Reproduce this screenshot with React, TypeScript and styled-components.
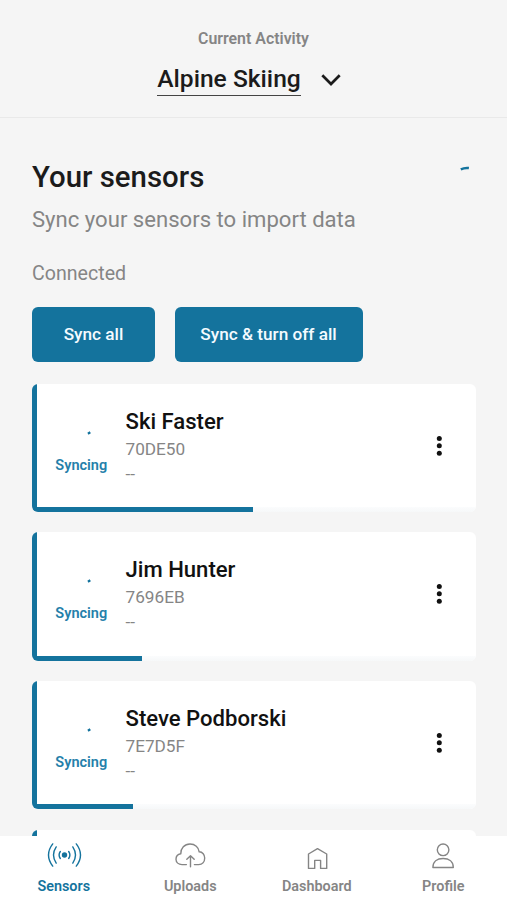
import React from 'react';
import styled, { createGlobalStyle } from 'styled-components';

const BLUE = '#14739d';
const GRAY = '#858585';

const GlobalStyle = createGlobalStyle`
  * { box-sizing: border-box; }
  html, body { margin: 0; padding: 0; background: #f5f5f5; }
  body { font-family: Roboto, "Liberation Sans", sans-serif; color: #1b1b1b; }
  button { font: inherit; border: 0; padding: 0; background: none; color: inherit; }
  h1, h2, h3, p { margin: 0; }
`;

const Screen = styled.div`
  display: flex;
  flex-direction: column;
  width: 507px;
  height: 900px;
  overflow: hidden;
  background: #f5f5f5;
`;

const Header = styled.header`
  flex: none;
  height: 118px;
  padding-top: 29px;
  display: flex;
  flex-direction: column;
  align-items: center;
  border-bottom: 1px solid #e9e9e9;
`;

const HeaderLabel = styled.div`
  font-size: 15.9px;
  line-height: 20px;
  font-weight: 600;
  color: #858585;
`;

const ActivityPicker = styled.button`
  display: flex;
  align-items: flex-start;
  gap: 20px;
  margin: 14px 0 0 -9px;
`;

const ActivityName = styled.span`
  height: 33px;
  line-height: 32px;
  font-size: 24.6px;
  font-weight: 500;
  white-space: nowrap;
  border-bottom: 1.5px solid #444;
`;

const Chevron = styled.svg`
  margin-top: 11px;
`;

const Main = styled.main`
  flex: 1;
  min-height: 0;
  overflow: hidden;
  padding: 41px 31px 0 32px;
`;

const TitleRow = styled.div`
  display: flex;
  justify-content: space-between;
  height: 36px;
`;

const Title = styled.h1`
  font-size: 29.4px;
  line-height: 36px;
  font-weight: 500;
  white-space: nowrap;
`;

const Subtitle = styled.p`
  margin-top: 8px;
  font-size: 22.1px;
  line-height: 32px;
  color: ${GRAY};
  white-space: nowrap;
`;

const SectionLabel = styled.h2`
  margin-top: 27px;
  font-size: 19.6px;
  line-height: 24px;
  font-weight: 400;
  color: ${GRAY};
`;

const Actions = styled.div`
  display: flex;
  gap: 19.5px;
  margin-top: 21px;
`;

const ActionButton = styled.button<{ $width: number }>`
  width: ${(p) => p.$width}px;
  height: 54.5px;
  border-radius: 6px;
  background: ${BLUE};
  color: #f4fbff;
  font-size: 17.2px;
  font-weight: 500;
  white-space: nowrap;
`;

const CardList = styled.div`
  display: flex;
  flex-direction: column;
  gap: 20.2px;
  margin-top: 22px;
`;

const Card = styled.article`
  flex: none;
  height: 128.5px;
  display: flex;
  flex-direction: column;
  justify-content: flex-end;
  overflow: hidden;
  padding-left: 5px;
  border-radius: 6px;
  background: linear-gradient(to right, ${BLUE} 5px, #fff 5px);
`;

const CardBody = styled.div`
  flex: 1;
  display: flex;
`;

const SyncStatus = styled.div`
  width: 88.5px;
  display: flex;
  flex-direction: column;
  align-items: center;
  font-size: 14.5px;
  line-height: 20px;
  font-weight: 600;
  color: #2580aa;
`;

const StatusSpinner = styled.svg`
  margin: 37px 0 15px;
`;

const Details = styled.div`
  flex: 1;
  padding-top: 22px;
`;

const SensorName = styled.h3`
  padding-bottom: 1px;
  font-size: 22.1px;
  line-height: 30px;
  font-weight: 500;
  color: #111;
`;

const SensorMeta = styled.div`
  font-size: 17.2px;
  line-height: 25px;
  color: ${GRAY};
`;

const MenuButton = styled.button`
  width: 74px;
  display: flex;
  justify-content: center;
  padding-top: 50px;
`;

const Track = styled.div`
  height: 5px;
  background: linear-gradient(#fbfcfd, #f6f8f9);
`;

const Progress = styled.div`
  height: 100%;
  background: ${BLUE};
`;

const NavBar = styled.nav`
  flex: none;
  height: 64px;
  padding-left: 0.5px;
  display: grid;
  grid-template-columns: repeat(4, 126.5px);
  background: #fff;
`;

const NavItem = styled.button<{ $active?: boolean }>`
  display: flex;
  flex-direction: column;
  align-items: center;
  gap: 1px;
  padding-top: 2px;
  font-size: 14.4px;
  line-height: 20px;
  font-weight: 600;
  color: ${(p) => (p.$active ? BLUE : '#858585')};
`;

const NavIcon = styled.svg`
  display: block;
  width: 40px;
  height: 38px;
  fill: none;
  stroke: currentColor;
  stroke-width: 1.4;
  stroke-linecap: round;
  stroke-linejoin: round;
`;

const SensorsIcon = () => (
  <NavIcon viewBox="0 0 40 38">
    <circle cx="20.5" cy="17" r="2.7" fill="currentColor" stroke="none" />
    <path d="M16.3 13.5Q13.9 17 16.3 20.5M24.7 13.5Q27.1 17 24.7 20.5M12.2 8.9Q6.8 17 12.2 25.1M28.8 8.9Q34.2 17 28.8 25.1M8.7 5.9Q0.3 17 8.7 28.1M32.3 5.9Q40.7 17 32.3 28.1" />
  </NavIcon>
);

const UploadsIcon = () => (
  <NavIcon viewBox="0 0 40 38">
    <path d="M16.4 26.6H12C8.5 26.6 6 24.3 6 21.3C6 18.3 8 16.2 10.8 15.8C10.6 10.3 14.6 6 20 6C25 6 28.7 9.2 29.2 13.8C32.5 13.9 34.7 16.8 34.7 20.1C34.7 23.9 32.2 26.6 28.7 26.6H24.4M20.5 28.7V18.2M16.8 21.3L20.5 17.7L24.2 21.3" />
  </NavIcon>
);

const DashboardIcon = () => (
  <NavIcon viewBox="0 0 40 38">
    <path d="M11.5 16L20.5 10.7L29.7 16V30.4H23.6V22.4H17.7V30.4H11.5Z" />
  </NavIcon>
);

const ProfileIcon = () => (
  <NavIcon viewBox="0 0 40 38">
    <circle cx="20.1" cy="11.8" r="5.8" />
    <path d="M9.9 29.5C9.9 23.7 14.1 20.5 20.1 20.5S30.3 23.7 30.3 29.5Z" />
  </NavIcon>
);

const sensors = [
  { name: 'Ski Faster', id: '70DE50', progress: 216 / 439 },
  { name: 'Jim Hunter', id: '7696EB', progress: 105.2 / 439 },
  { name: 'Steve Podborski', id: '7E7D5F', progress: 96.2 / 439 },
  { name: '', id: '', progress: 0 },
];

export default function App() {
  return (
    <Screen>
      <GlobalStyle />
      <Header>
        <HeaderLabel>Current Activity</HeaderLabel>
        <ActivityPicker>
          <ActivityName>Alpine Skiing</ActivityName>
          <Chevron width="20" height="13" viewBox="0 0 20 13" fill="none" stroke="#1b1b1b" strokeWidth="2.7">
            <path d="M1.3 1.3L10 10L18.7 1.3" />
          </Chevron>
        </ActivityPicker>
      </Header>
      <Main>
        <TitleRow>
          <Title>Your sensors</Title>
          <svg width="24" height="24" viewBox="0 0 24 24" fill="none" stroke={BLUE} strokeWidth="2.5">
            <path d="M8.8 10.3Q12.4 8.5 16.9 9" />
          </svg>
        </TitleRow>
        <Subtitle>Sync your sensors to import data</Subtitle>
        <SectionLabel>Connected</SectionLabel>
        <Actions>
          <ActionButton $width={123}>Sync all</ActionButton>
          <ActionButton $width={188}>Sync &amp; turn off all</ActionButton>
        </Actions>
        <CardList>
          {sensors.map((s, i) => (
            <Card key={i}>
              {s.name && (
                <CardBody>
                  <SyncStatus>
                    <StatusSpinner width="24" height="20" viewBox="0 0 24 20" fill="none" stroke={BLUE} strokeWidth="2.4">
                      <path d="M18.9 12.7L21.3 11.3" />
                    </StatusSpinner>
                    Syncing
                  </SyncStatus>
                  <Details>
                    <SensorName>{s.name}</SensorName>
                    <SensorMeta>{s.id}</SensorMeta>
                    <SensorMeta>--</SensorMeta>
                  </Details>
                  <MenuButton aria-label="Sensor options">
                    <svg width="6" height="24" viewBox="0 0 6 24" fill="#111">
                      <circle cx="3.3" cy="4.4" r="2.5" />
                      <circle cx="3.3" cy="11.8" r="2.5" />
                      <circle cx="3.3" cy="19.2" r="2.5" />
                    </svg>
                  </MenuButton>
                </CardBody>
              )}
              <Track>
                <Progress style={{ width: `${s.progress * 100}%` }} />
              </Track>
            </Card>
          ))}
        </CardList>
      </Main>
      <NavBar>
        <NavItem $active><SensorsIcon />Sensors</NavItem>
        <NavItem><UploadsIcon />Uploads</NavItem>
        <NavItem><DashboardIcon />Dashboard</NavItem>
        <NavItem><ProfileIcon />Profile</NavItem>
      </NavBar>
    </Screen>
  );
}
